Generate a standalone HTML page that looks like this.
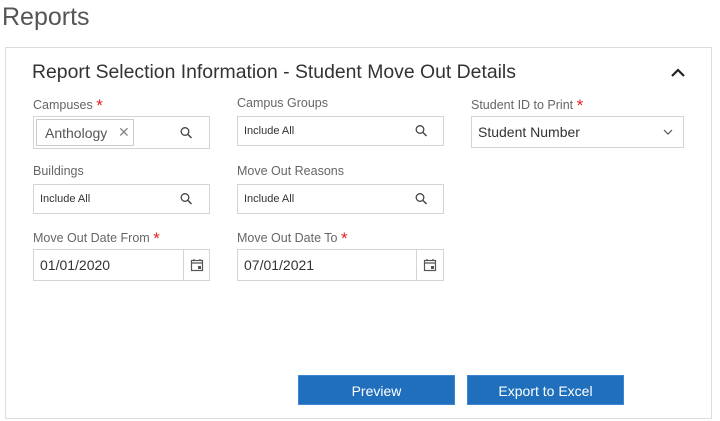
<!DOCTYPE html><html><head><style>
body{margin:0;width:720px;height:421px;background:#fff;font-family:"Liberation Sans",sans-serif;position:relative;overflow:hidden;color:#333}
.a{position:absolute}
.lbl{position:absolute;font-size:12.5px;color:#666;line-height:15px}
.lbl b{color:#e02020;font-weight:normal;font-size:17px;line-height:15px;position:relative;top:2px}
.in{position:absolute;border:1px solid #d4d4d4;box-sizing:border-box;background:#fff}
.t{position:absolute;font-size:11px;color:#333;top:50%;transform:translateY(-50%);left:6px}
.t2{position:absolute;font-size:14px;color:#333;top:50%;transform:translateY(-50%);left:6px}
.ic{position:absolute;top:50%;transform:translateY(-50%)}
.btn{position:absolute;background:#1f6fbc;color:#fff;font-size:14px;text-align:center;line-height:30px;height:30px;top:375px;width:157px;border:1px solid #3f86d0;box-sizing:border-box}
</style></head><body>
<div class="a" style="left:2px;top:3px;font-size:25px;color:#555">Reports</div>
<div class="a" style="left:5px;top:47px;width:707px;height:372px;border:1px solid #ddd;box-sizing:border-box"></div>
<div class="a" style="left:32px;top:61px;font-size:19.4px;color:#333">Report Selection Information - Student Move Out Details</div>
<svg class="a" style="left:670px;top:67px" width="16" height="12"><path d="M2 9 L8 3 L14 9" stroke="#222" stroke-width="2.2" fill="none"/></svg>

<div class="lbl" style="left:33px;top:96px">Campuses <b>*</b></div>
<div class="in" style="left:33px;top:116px;width:177px;height:33px">
 <div class="a" style="left:2px;top:2px;width:98px;height:27px;border:1px solid #ccc;box-sizing:border-box"><span class="a" style="left:8px;top:5px;font-size:14px;color:#555">Anthology</span><span class="a" style="left:81px;top:4px;font-size:14px;color:#888">✕</span></div>
 <svg class="ic" style="left:146px" width="13" height="13"><circle cx="5" cy="5" r="3.8" stroke="#444" stroke-width="1.3" fill="none"/><path d="M8 8 L11.5 11.5" stroke="#444" stroke-width="1.5"/></svg>
</div>
<div class="lbl" style="left:237px;top:96px">Campus Groups</div>
<div class="in" style="left:237px;top:116px;width:207px;height:30px"><span class="t">Include All</span>
 <svg class="ic" style="left:177px" width="13" height="13"><circle cx="5" cy="5" r="3.8" stroke="#444" stroke-width="1.3" fill="none"/><path d="M8 8 L11.5 11.5" stroke="#444" stroke-width="1.5"/></svg></div>
<div class="lbl" style="left:471px;top:96px">Student ID to Print <b>*</b></div>
<div class="in" style="left:471px;top:116px;width:213px;height:32px"><span class="t2">Student Number</span>
 <svg class="ic" style="left:190px" width="12" height="8"><path d="M2 2 L6 6 L10 2" stroke="#555" stroke-width="1.2" fill="none"/></svg></div>

<div class="lbl" style="left:33px;top:164px">Buildings</div>
<div class="in" style="left:33px;top:184px;width:177px;height:30px"><span class="t">Include All</span>
 <svg class="ic" style="left:146px" width="13" height="13"><circle cx="5" cy="5" r="3.8" stroke="#444" stroke-width="1.3" fill="none"/><path d="M8 8 L11.5 11.5" stroke="#444" stroke-width="1.5"/></svg></div>
<div class="lbl" style="left:237px;top:164px">Move Out Reasons</div>
<div class="in" style="left:237px;top:184px;width:207px;height:30px"><span class="t">Include All</span>
 <svg class="ic" style="left:177px" width="13" height="13"><circle cx="5" cy="5" r="3.8" stroke="#444" stroke-width="1.3" fill="none"/><path d="M8 8 L11.5 11.5" stroke="#444" stroke-width="1.5"/></svg></div>

<div class="lbl" style="left:33px;top:229px">Move Out Date From <b>*</b></div>
<div class="in" style="left:33px;top:249px;width:177px;height:32px"><span class="t2">01/01/2020</span>
 <div class="a" style="left:149px;top:0;width:1px;height:30px;background:#d4d4d4"></div>
 <svg class="ic" style="left:156px" width="14" height="14"><rect x="1.5" y="2.5" width="11" height="10" stroke="#555" stroke-width="1.2" fill="none"/><path d="M1.5 5 H12.5 M4 1 V3 M10 1 V3" stroke="#555" stroke-width="1.2"/><rect x="8" y="8" width="3" height="3" fill="#555"/></svg></div>
<div class="lbl" style="left:237px;top:229px">Move Out Date To <b>*</b></div>
<div class="in" style="left:237px;top:249px;width:207px;height:32px"><span class="t2">07/01/2021</span>
 <div class="a" style="left:178px;top:0;width:1px;height:30px;background:#d4d4d4"></div>
 <svg class="ic" style="left:185px" width="14" height="14"><rect x="1.5" y="2.5" width="11" height="10" stroke="#555" stroke-width="1.2" fill="none"/><path d="M1.5 5 H12.5 M4 1 V3 M10 1 V3" stroke="#555" stroke-width="1.2"/><rect x="8" y="8" width="3" height="3" fill="#555"/></svg></div>

<div class="btn" style="left:298px">Preview</div>
<div class="btn" style="left:467px">Export to Excel</div>
</body></html>
